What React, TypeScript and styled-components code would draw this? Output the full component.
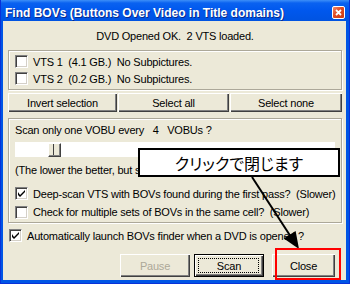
import React, { FC } from "react";
import styled, { createGlobalStyle } from "styled-components";

const GlobalStyle = createGlobalStyle`
  html, body {
    margin: 0;
    padding: 0;
  }
  body {
    width: 350px;
    height: 284px;
    overflow: hidden;
    font-family: "Liberation Sans", Arial, sans-serif;
  }
`;

const Window = styled.div`
  position: relative;
  width: 350px;
  height: 284px;
  box-sizing: border-box;
  display: flex;
  flex-direction: column;
  background: #0055e5;
  border: 1px solid #0831d9;
  border-top: none;
`;

const TitleBar = styled.div`
  height: 21px;
  flex: none;
  display: flex;
  align-items: flex-start;
  justify-content: space-between;
  padding: 0 4px 0 4px;
  background: linear-gradient(
    to bottom,
    #3d8ff8 0px,
    #0a62f0 3px,
    #0058ee 10px,
    #0053e1 100%
  );
`;

const TitleText = styled.div`
  margin-top: 6px;
  line-height: 14px;
  font-size: 12px;
  font-weight: bold;
  color: #fff;
  white-space: nowrap;
  text-shadow: 1px 1px 0 #0a2a8a;
`;

const TitleClose = styled.div`
  margin-top: 6px;
  width: 13px;
  height: 13px;
  box-sizing: border-box;
  border: 1px solid #fff;
  border-radius: 2px;
  background: linear-gradient(135deg, #f08a6a 0%, #e04a22 45%, #c83a14 100%);
  display: flex;
  align-items: center;
  justify-content: center;
`;

const Client = styled.div`
  flex: 1;
  margin: 0 3px 3px 2px;
  padding: 0 4px 0 5px;
  background: #ece9d8;
  display: flex;
  flex-direction: column;
  font-size: 11px;
  letter-spacing: -0.2px;
  color: #000;
`;

const Status = styled.div`
  margin-top: 8px;
  line-height: 14px;
  text-align: center;
  white-space: pre;
`;

const Group = styled.div<{ $height: number; $pad: string }>`
  height: ${({ $height }) => $height}px;
  box-sizing: border-box;
  border: 1px solid #aca899;
  box-shadow: inset 1px 1px 0 #fff, 1px 1px 0 #fff;
  padding: ${({ $pad }) => $pad};
  display: flex;
  flex-direction: column;
`;

const CheckRow = styled.div<{ $height: number; $indent?: number }>`
  height: ${({ $height }) => $height}px;
  display: flex;
  align-items: center;
  margin-left: ${({ $indent }) => $indent || 0}px;
  flex: none;
`;

const Box = styled.span`
  width: 13px;
  height: 13px;
  box-sizing: border-box;
  flex: none;
  background: #fff;
  border: 1px solid;
  border-color: #808080 #fff #fff #808080;
  box-shadow: inset 1px 1px 0 #404040, inset -1px -1px 0 #d4d0c8;
  display: flex;
  align-items: center;
  justify-content: center;
`;

const Label = styled.span`
  margin-left: 5px;
  line-height: 14px;
  white-space: pre;
`;

const TopButtons = styled.div`
  margin-top: 3px;
  display: grid;
  grid-template-columns: 109px 111px 112px;
  column-gap: 1px;
`;

const Button = styled.div<{ $width?: number; $disabled?: boolean; $default?: boolean }>`
  position: relative;
  height: ${({ $default }) => ($default ? 23 : 19)}px;
  width: ${({ $width }) => ($width ? `${$width}px` : "auto")};
  box-sizing: border-box;
  background: #ece9d8;
  display: flex;
  align-items: center;
  justify-content: center;
  color: ${({ $disabled }) => ($disabled ? "#aca899" : "#000")};
  box-shadow: ${({ $default }) =>
    $default
      ? "inset 1px 1px 0 #000, inset -1px -1px 0 #000, inset 2px 2px 0 #fff, inset -2px -2px 0 #404040, inset -3px -3px 0 #808080"
      : "inset 1px 1px 0 #fff, inset -1px -1px 0 #404040, inset -2px -2px 0 #808080"};
  white-space: nowrap;
`;

const FocusRing = styled.span`
  position: absolute;
  inset: 4px 5px 4px 4px;
  border: 1px dotted #000;
`;

const Line = styled.div<{ $top: number }>`
  margin-top: ${({ $top }) => $top}px;
  line-height: 14px;
  white-space: pre;
  flex: none;
`;

const Slider = styled.div`
  margin-top: 5px;
  height: 15px;
  flex: none;
  background: #fff;
  display: flex;
  align-items: center;
`;

const Thumb = styled.div`
  position: relative;
  margin-left: 33px;
  width: 13px;
  height: 14px;
  box-sizing: border-box;
  background: #ece9d8;
  border-top: 1px solid #fff;
  border-left: 1px solid #fff;
  border-right: 1px solid #404040;
  border-bottom: 1px solid #404040;
  box-shadow: inset -1px -1px 0 #808080;
  &::after {
    content: "";
    position: absolute;
    left: 4px;
    top: 0;
    bottom: 1px;
    width: 1px;
    background: #404040;
  }
`;

const BottomButtons = styled.div`
  margin-top: 9px;
  display: flex;
  justify-content: flex-end;
  gap: 4px;
  padding-right: 7px;
`;

const Callout = styled.div`
  position: absolute;
  left: 137px;
  top: 148px;
  width: 202px;
  height: 29px;
  box-sizing: border-box;
  border: 2px solid #000;
  background: #fff;
  display: flex;
  align-items: center;
  justify-content: center;
  font-family: "Noto Sans CJK JP", sans-serif;
  font-size: 16px;
  font-feature-settings: "palt";
  color: #000;
`;

const RedFrame = styled.div`
  position: absolute;
  left: 274px;
  top: 248px;
  width: 66px;
  height: 32px;
  box-sizing: border-box;
  border: 2px solid #f00;
`;

const ArrowLayer = styled.svg`
  position: absolute;
  left: 0;
  top: 0;
  pointer-events: none;
`;

const Check: FC = () => (
  <svg width="7" height="7" viewBox="0 0 7 7">
    <path d="M0 2 L0 5 L2 7 L7 2 L7 -0 L2 5 Z" fill="#000" />
  </svg>
);

const CheckBox: FC<{ checked?: boolean }> = ({ checked }) => (
  <Box>{checked && <Check />}</Box>
);

const App: FC = () => {
  return (
    <>
      <GlobalStyle />
      <Window>
        <TitleBar>
          <TitleText>Find BOVs (Buttons Over Video in Title domains)</TitleText>
          <TitleClose>
            <svg width="7" height="7" viewBox="0 0 7 7">
              <path d="M1 1 L6 6 M6 1 L1 6" stroke="#fff" strokeWidth="1.8" />
            </svg>
          </TitleClose>
        </TitleBar>
        <Client>
          <Status>{"DVD Opened OK.  2 VTS loaded."}</Status>
          <Group $height={40} $pad="2px 0 0 6px" style={{ marginTop: 7 }}>
            <CheckRow $height={17}>
              <CheckBox />
              <Label>{"VTS 1  (4.1 GB.)  No Subpictures."}</Label>
            </CheckRow>
            <CheckRow $height={17}>
              <CheckBox />
              <Label>{"VTS 2  (0.2 GB.)  No Subpictures."}</Label>
            </CheckRow>
          </Group>
          <TopButtons>
            <Button>Invert selection</Button>
            <Button>Select all</Button>
            <Button>Select none</Button>
          </TopButtons>
          <Group $height={105} $pad="4px 6px 0 6px" style={{ marginTop: 6 }}>
            <Line $top={0}>{"Scan only one VOBU every   4   VOBUs ?"}</Line>
            <Slider>
              <Thumb />
            </Slider>
            <Line $top={6}>{"(The lower the better, but slower)"}</Line>
            <CheckRow $height={19} style={{ marginTop: 7 }}>
              <CheckBox checked />
              <Label>{"Deep-scan VTS with BOVs found during the first pass?  (Slower)"}</Label>
            </CheckRow>
            <CheckRow $height={18}>
              <CheckBox />
              <Label>{"Check for multiple sets of BOVs in the same cell?  (Slower)"}</Label>
            </CheckRow>
          </Group>
          <CheckRow $height={19} $indent={1} style={{ marginTop: 3 }}>
            <CheckBox checked />
            <Label>{"Automatically launch BOVs finder when a DVD is opened ?"}</Label>
          </CheckRow>
          <BottomButtons>
            <Button $width={70} $disabled style={{ height: 23 }}>
              Pause
            </Button>
            <Button $width={70} $default>
              Scan
              <FocusRing />
            </Button>
            <Button $width={63} style={{ height: 23, marginLeft: 4 }}>
              Close
            </Button>
          </BottomButtons>
        </Client>
        <Callout>クリックで閉じます</Callout>
        <ArrowLayer width="350" height="284" viewBox="0 0 350 284">
          <line x1="251" y1="177" x2="290" y2="237" stroke="#000" strokeWidth="2" />
          <polygon points="298,249 282.8,238.6 294.6,231" fill="#000" />
        </ArrowLayer>
        <RedFrame />
      </Window>
    </>
  );
};

export default App;
